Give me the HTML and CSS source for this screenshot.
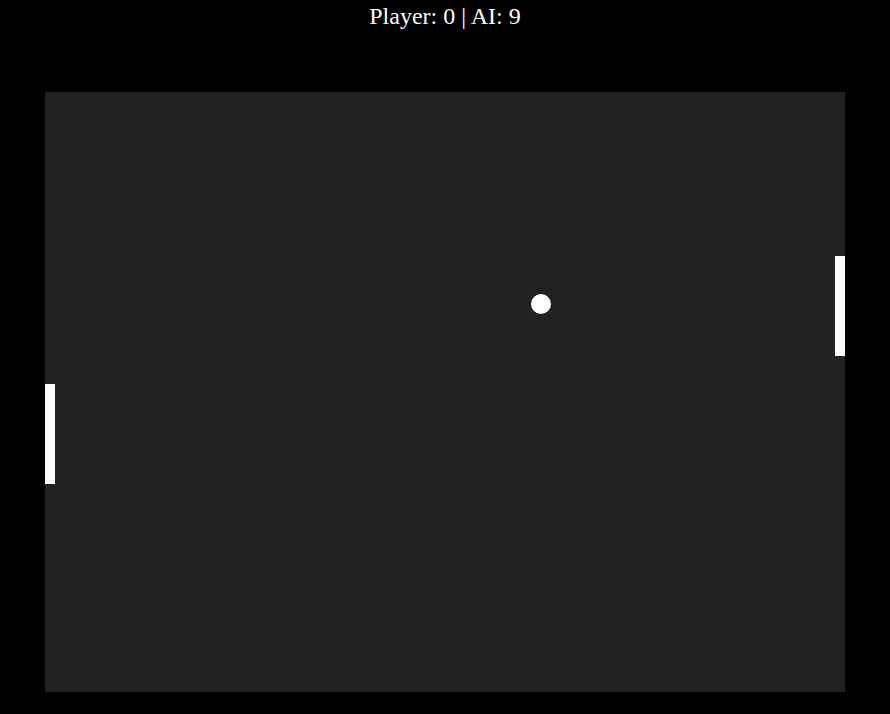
FILE: index.html
```html
<!DOCTYPE html>
<html>
<head>
<meta charset="utf-8">
<link rel="stylesheet" href="styles.css">
</head>
<body>
<div class="score">Player: 0 | AI: 9</div>
<div class="court">
  <div class="paddle paddle-left"></div>
  <div class="paddle paddle-right"></div>
  <div class="ball"></div>
</div>
</body>
</html>
```
FILE: styles.css
```css
html, body {
  margin: 0;
  padding: 0;
  background: #000;
}
body {
  color: #fff;
  font-family: "Liberation Serif", "Times New Roman", serif;
  display: flex;
  flex-direction: column;
  align-items: center;
}
.score {
  font-size: 24px;
  line-height: 28px;
  padding-top: 2px;
  height: 28px;
}
.court {
  margin-top: 62px;
  width: 800px;
  height: 600px;
  background: #222;
  position: relative;
}
.paddle {
  position: absolute;
  width: 10px;
  height: 100px;
  background: #fff;
}
.paddle-left {
  left: 0;
  top: 292px;
}
.paddle-right {
  right: 0;
  top: 164px;
}
.ball {
  position: absolute;
  width: 20px;
  height: 20px;
  border-radius: 50%;
  background: #fff;
  left: 486px;
  top: 202px;
}
```
